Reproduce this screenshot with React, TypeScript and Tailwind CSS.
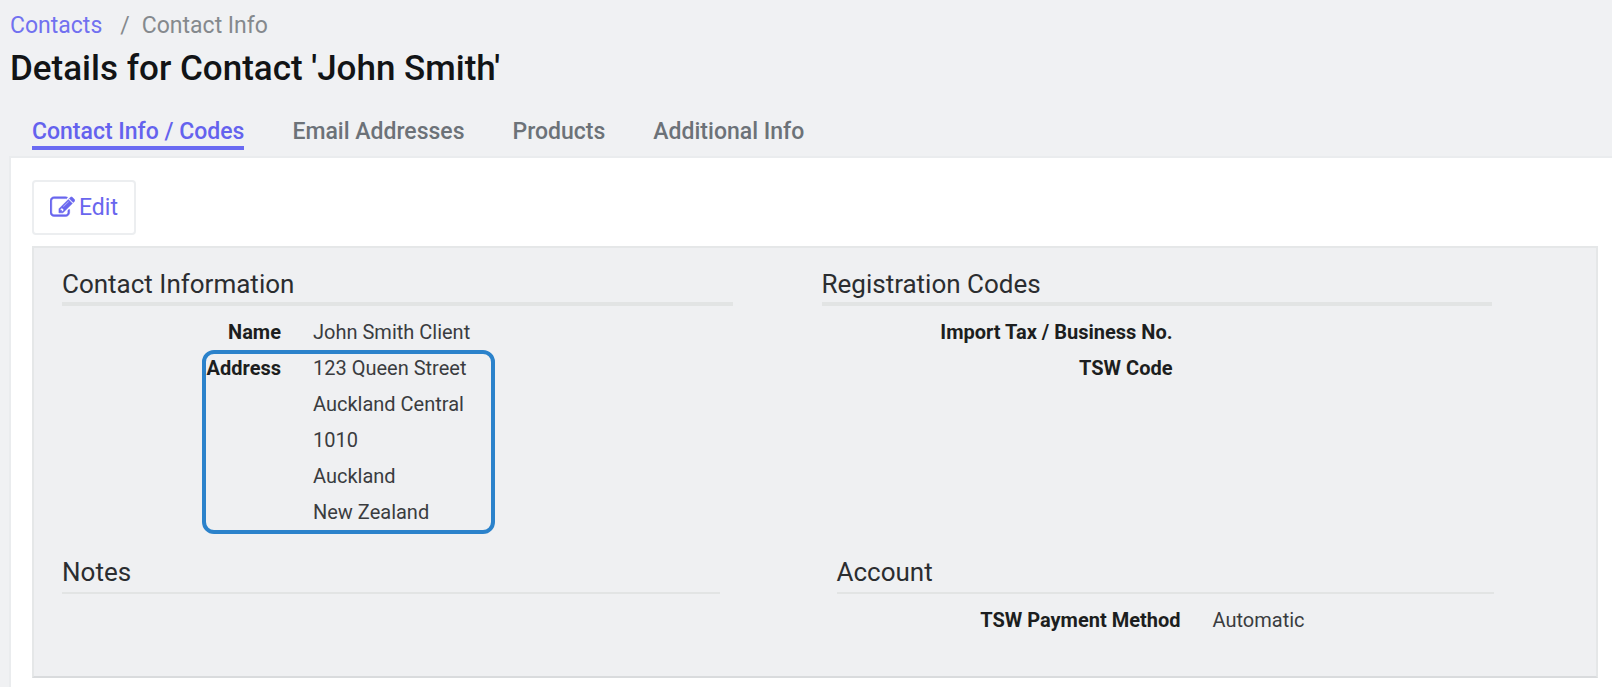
import type { ReactNode } from "react";
import clsx from "clsx";

type SectionProps = {
  title: string;
  thick?: boolean;
  children?: ReactNode;
};

const tabs = ["Contact Info / Codes", "Email Addresses", "Products", "Additional Info"];

const address = ["123 Queen Street", "Auckland Central", "1010", "Auckland", "New Zealand"];

const EditIcon = () => (
  <svg
    viewBox="0 0 1792 1792"
    className="size-[25px]"
    fill="currentColor"
    stroke="currentColor"
    strokeWidth="36"
    aria-hidden="true"
  >
    <path d="M888 1184l116-116-152-152-116 116v56h96v96h56zm440-720q-16-16-33 1l-350 350q-17 17-1 33t33-1l350-350q17-17 1-33zm80 594v190q0 119-84.5 203.5t-203.5 84.5h-832q-119 0-203.5-84.5t-84.5-203.5v-832q0-119 84.5-203.5t203.5-84.5h832q63 0 117 25 15 7 18 23 3 17-9 29l-49 49q-14 14-32 8-23-6-45-6h-832q-66 0-113 47t-47 113v832q0 66 47 113t113 47h832q66 0 113-47t47-113v-126q0-13 9-22l64-64q15-15 35-7t20 29zm-96-738l288 288-672 672h-288v-288zm444 132l-92 92-288-288 92-92q28-28 68-28t68 28l152 152q28 28 28 68t-28 68z" />
  </svg>
);

const Section = ({ title, thick, children }: SectionProps) => {
  return (
    <section>
      <h2
        className={clsx(
          "text-[26px] leading-8 text-[#2b2d30] border-[#e2e4e4]",
          thick ? "pb-0.5 border-b-4" : "pb-1 border-b-2"
        )}
      >
        {title}
      </h2>
      {children}
    </section>
  );
};

const App = () => {
  return (
    <div className="min-h-screen flex flex-col bg-[#f0f1f3] font-['Roboto',sans-serif] text-[23px] leading-9 text-[#3a3c3f]">
      <header className="pl-[10px] pt-2">
        <nav aria-label="Breadcrumb" className="flex gap-[18px]">
          <a href="#contacts" className="text-[#7271f0]">
            Contacts
          </a>
          <span className="flex gap-3 text-[#85898d]">
            <span>/</span>
            <span>Contact Info</span>
          </span>
        </nav>
        <h1 className="text-[35px] leading-[50px] font-medium text-[#121416]">
          Details for Contact 'John Smith'
        </h1>
        <nav aria-label="Contact sections" className="flex gap-12 pl-[22px] pt-6 pb-[6px] font-medium text-[#6c7278]">
          {tabs.map((tab, i) => (
            <a
              key={tab}
              href="#tab"
              className={clsx(
                "border-b-4 leading-7",
                i === 0 ? "border-[#6a6af2] text-[#6462ee]" : "border-transparent"
              )}
            >
              {tab}
            </a>
          ))}
        </nav>
      </header>

      <main className="flex-1 ml-[9px] pl-[21px] pr-[14px] pt-[22px] pb-2 bg-white border-t-2 border-l-2 border-[#eaecee]">
        <button
          type="button"
          className="flex items-center gap-1 h-[55px] px-4 rounded-sm border-2 border-[#eceef0] bg-white text-[#6966ee] cursor-pointer"
        >
          <EditIcon />
          Edit
        </button>

        <div className="mt-[11px] pl-[28px] pt-5 pb-[38px] bg-[#eff0f2] border-2 border-[#e5e7e8] border-b-[#d9dbdd] text-[20px] leading-9">
          <div className="grid grid-cols-2 gap-[89px] pr-[104px]">
            <Section title="Contact Information" thick>
              <dl className="pt-2">
                <div className="grid grid-cols-[219px_1fr] gap-8">
                  <dt className="text-right font-bold text-[#1c1e20]">Name</dt>
                  <dd>John Smith Client</dd>
                </div>
                <div className="relative grid grid-cols-[219px_1fr] gap-8">
                  <dt className="text-right font-bold text-[#1c1e20]">Address</dt>
                  <dd>
                    {address.map((line) => (
                      <p key={line}>{line}</p>
                    ))}
                  </dd>
                  <div className="absolute top-0 -bottom-1 left-[140px] w-[293px] rounded-xl border-4 border-[#2b82cb] pointer-events-none" />
                </div>
              </dl>
            </Section>
            <Section title="Registration Codes" thick>
              <dl className="pt-2">
                <div className="grid grid-cols-[351px_1fr] gap-8">
                  <dt className="text-right font-bold text-[#1c1e20]">Import Tax / Business No.</dt>
                  <dd />
                </div>
                <div className="grid grid-cols-[351px_1fr] gap-8">
                  <dt className="text-right font-bold text-[#1c1e20]">TSW Code</dt>
                  <dd />
                </div>
              </dl>
            </Section>
          </div>

          <div className="grid grid-cols-2 gap-[117px] pr-[102px] pt-[26px]">
            <Section title="Notes" />
            <Section title="Account">
              <dl className="pt-2">
                <div className="grid grid-cols-[344px_1fr] gap-8">
                  <dt className="text-right font-bold text-[#1c1e20]">TSW Payment Method</dt>
                  <dd>Automatic</dd>
                </div>
              </dl>
            </Section>
          </div>
        </div>
      </main>
    </div>
  );
};

export default App;
